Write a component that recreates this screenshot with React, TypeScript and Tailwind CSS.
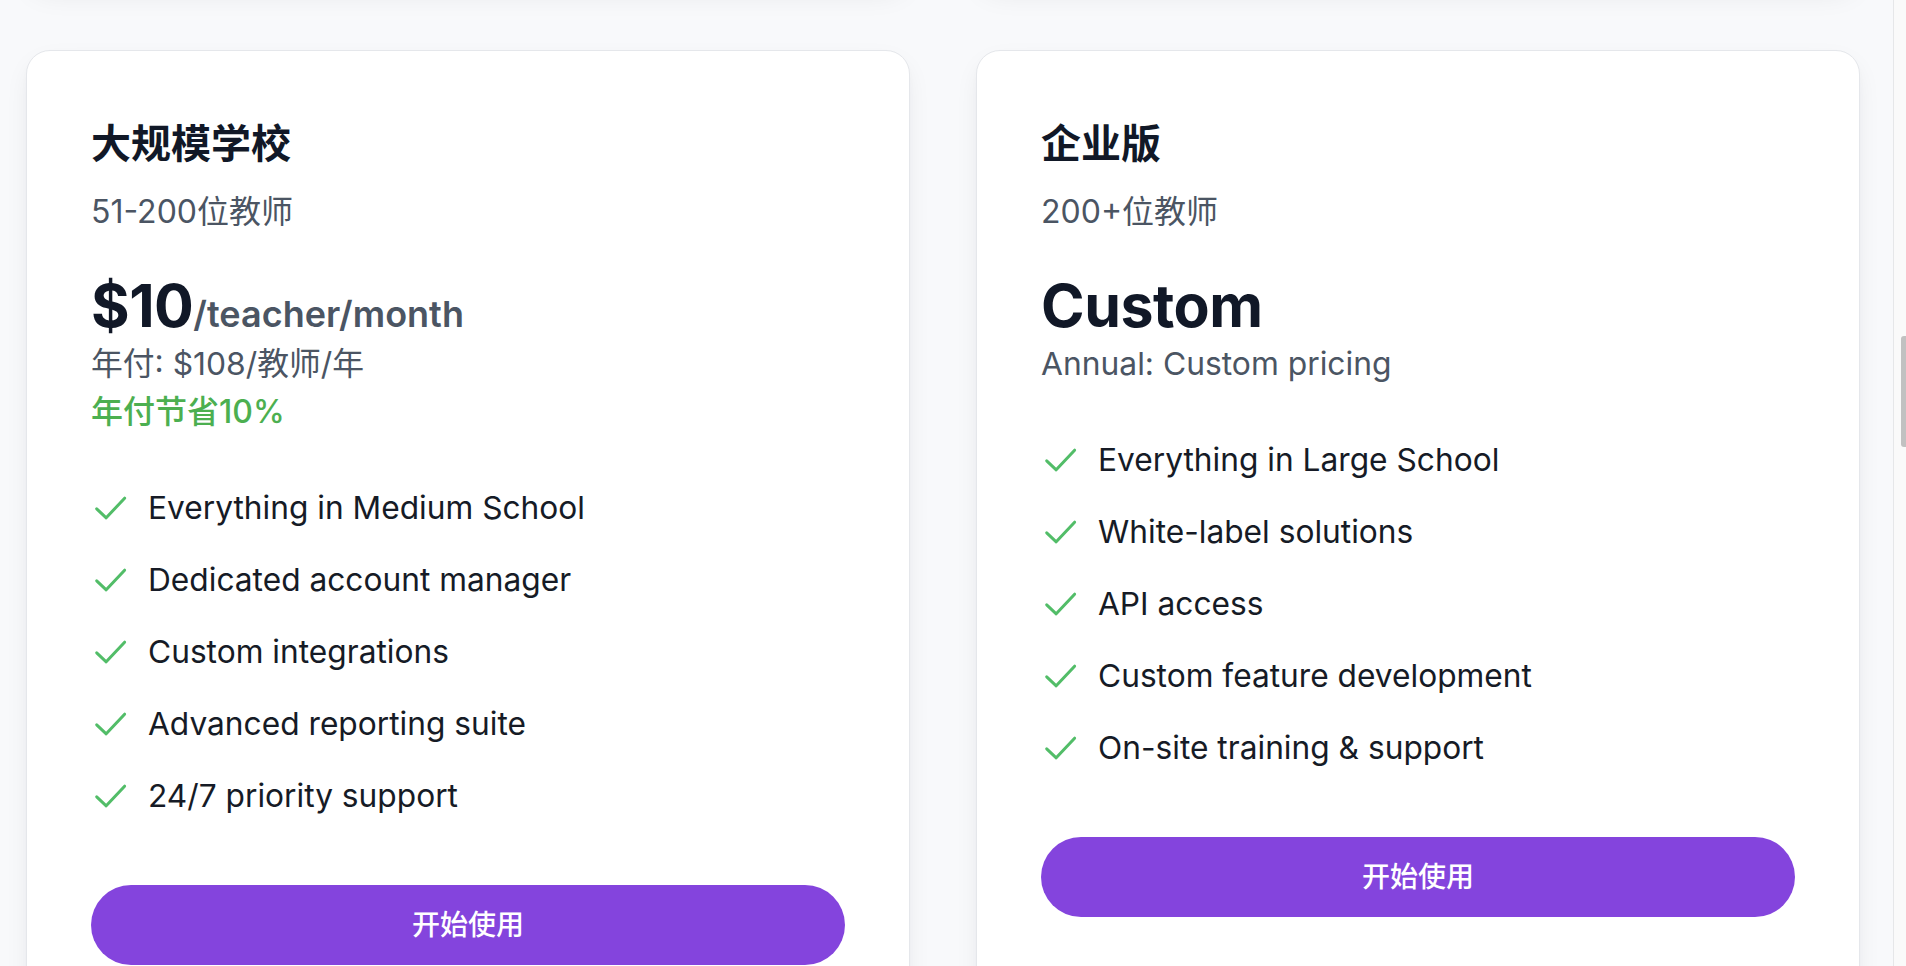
import React from "react";

type Plan = {
  title: string;
  teachers: string;
  price: string;
  unit?: string;
  annual: string;
  save?: string;
  features: string[];
};

const plansTop = [0, 1];

const plans: Plan[] = [
  {
    title: "大规模学校",
    teachers: "51-200位教师",
    price: "$10",
    unit: "/teacher/month",
    annual: "年付: $108/教师/年",
    save: "年付节省10%",
    features: [
      "Everything in Medium School",
      "Dedicated account manager",
      "Custom integrations",
      "Advanced reporting suite",
      "24/7 priority support",
    ],
  },
  {
    title: "企业版",
    teachers: "200+位教师",
    price: "Custom",
    annual: "Annual: Custom pricing",
    features: [
      "Everything in Large School",
      "White-label solutions",
      "API access",
      "Custom feature development",
      "On-site training & support",
    ],
  },
];

const CheckIcon = () => (
  <svg width="36" height="25" viewBox="0 0 36 25" fill="none" className="shrink-0">
    <polyline
      points="5.7,12.8 15.2,21.8 33.6,2.2"
      stroke="#52bd68"
      strokeWidth="3"
      strokeLinecap="round"
      strokeLinejoin="round"
    />
  </svg>
);

function Card({ plan }: { plan: Plan }) {
  return (
    <div className="h-[1000px] rounded-[24px] border border-[#e5e7eb] bg-white px-[64px] pt-[69px] shadow-[0_10px_28px_-6px_rgba(17,24,39,0.09),0_4px_10px_-4px_rgba(17,24,39,0.05)]">
      <h3 className="text-[40px] leading-[48px] font-bold text-[#111827]">{plan.title}</h3>
      <p className="mt-[24px] text-[32px] leading-[40px] text-[#4b5563]">{plan.teachers}</p>
      <div className="mt-[45px] flex h-[58px] items-baseline">
        <span className="text-[59px] leading-[58px] font-bold tracking-[-0.5px] text-[#111827]">{plan.price}</span>
        {plan.unit && (
          <span className="text-[36px] leading-[58px] font-semibold text-[#4b5563]">{plan.unit}</span>
        )}
      </div>
      <p className="mt-[9px] text-[31.8px] leading-[40px] text-[#4b5563]">{plan.annual}</p>
      {plan.save && (
        <p className="mt-[8px] text-[32px] leading-[40px] font-medium text-[#4caf50]">{plan.save}</p>
      )}
      <ul className="mt-[56px] flex flex-col gap-[32px]">
        {plan.features.map((f) => (
          <li key={f} className="flex h-[40px] items-center gap-[21px]">
            <CheckIcon />
            <span className="text-[31.7px] leading-[40px] text-[#161b26]">{f}</span>
          </li>
        ))}
      </ul>
      <button className="mt-[69px] flex h-[80px] w-full items-center justify-center rounded-full bg-[#8444dd] text-[28px] font-medium text-white">
        开始使用
      </button>
    </div>
  );
}

export default function App() {
  return (
    <div className="flex h-[966px] w-full overflow-hidden bg-[#f8f9fb] font-[Inter,'Noto_Sans_CJK_SC',sans-serif]">
      <main className="min-w-0 flex-1 overflow-hidden">
        <div className="mt-[-150px] grid grid-cols-[884px_884px] gap-x-[66px] gap-y-[66px] pl-[26px]">
          {plansTop.map((i) => (
            <div
              key={i}
              className="h-[134px] rounded-[24px] border border-[#e5e7eb] bg-white shadow-[0_12px_30px_-6px_rgba(17,24,39,0.1),0_4px_10px_-4px_rgba(17,24,39,0.05)]"
            />
          ))}
          {plans.map((p) => (
            <Card key={p.title} plan={p} />
          ))}
        </div>
      </main>
      <aside className="flex w-[13px] shrink-0 flex-col items-end border-l border-[#e6e7e9] bg-[#fafafa] pt-[336px]">
        <div className="h-[111px] w-[5px] rounded-l-[3px] bg-[#c1c1c1]" />
      </aside>
    </div>
  );
}
